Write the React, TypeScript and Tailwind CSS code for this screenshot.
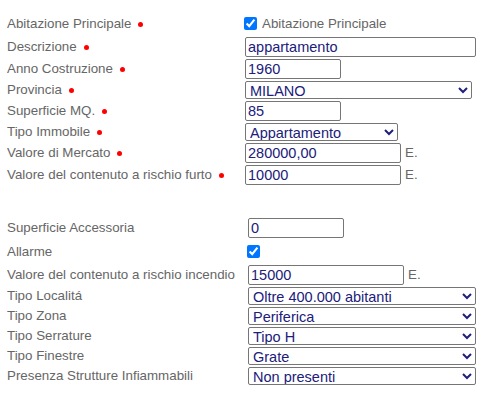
import React from 'react';

/**
 * Dati abitazione - form
 */

const labelCls = 'text-[13.33px] text-[#666666] leading-none whitespace-nowrap';
const inputCls =
  'h-[20px] border border-[#767676] rounded-[2px] bg-white px-[2px] text-[14.5px] leading-none text-[#20207a] outline-none';
const selectCls =
  'h-[18px] border border-[#767676] rounded-[2px] bg-white text-[14.5px] leading-none text-[#20207a] outline-none';

function Req() {
  return <span className="ml-[7px] inline-block h-[5px] w-[5px] rounded-full bg-[#ff0000] align-middle" />;
}

interface RowProps {
  label: string;
  required?: boolean;
  labelWidth: string;
  height: string;
  children: React.ReactNode;
}

function Row({ label, required, labelWidth, height, children }: RowProps) {
  return (
    <div className={`flex items-center ${height}`}>
      <div className={`${labelWidth} ${labelCls}`}>
        {label}
        {required && <Req />}
      </div>
      <div className="flex items-center">{children}</div>
    </div>
  );
}

function Euro() {
  return <span className="ml-[4px] text-[13.33px] text-[#666666]">E.</span>;
}

export default function App() {
  const w1 = 'w-[238px]';
  const w2 = 'w-[241px]';

  return (
    <div className="min-h-[398px] w-[485px] bg-white pl-[7px] pt-[12px] font-['Liberation_Sans',Arial,sans-serif]">
      {/* Dati principali */}
      <div>
        <Row label="Abitazione Principale" required labelWidth={w1} height="h-[24px]">
          <input type="checkbox" defaultChecked className="ml-[-1px] h-[13px] w-[13px] accent-[#0075ff]" />
          <span className={`ml-[5px] ${labelCls}`}>Abitazione Principale</span>
        </Row>
        <Row label="Descrizione" required labelWidth={w1} height="h-[22px]">
          <input defaultValue="appartamento" className={`${inputCls} w-[231px]`} />
        </Row>
        <Row label="Anno Costruzione" required labelWidth={w1} height="h-[22px]">
          <input defaultValue="1960" className={`${inputCls} w-[96px]`} />
        </Row>
        <Row label="Provincia" required labelWidth={w1} height="h-[20px]">
          <select defaultValue="MILANO" className={`${selectCls} w-[227px]`}>
            <option>MILANO</option>
          </select>
        </Row>
        <Row label="Superficie MQ." required labelWidth={w1} height="h-[22px]">
          <input defaultValue="85" className={`${inputCls} w-[96px]`} />
        </Row>
        <Row label="Tipo Immobile" required labelWidth={w1} height="h-[20px]">
          <select defaultValue="Appartamento" className={`${selectCls} w-[153px]`}>
            <option>Appartamento</option>
          </select>
        </Row>
        <Row label="Valore di Mercato" required labelWidth={w1} height="h-[22px]">
          <input defaultValue="280000,00" className={`${inputCls} w-[156px]`} />
          <Euro />
        </Row>
        <Row label="Valore del contenuto a rischio furto" required labelWidth={w1} height="h-[22px]">
          <input defaultValue="10000" className={`${inputCls} w-[156px]`} />
          <Euro />
        </Row>
      </div>

      {/* Dati accessori */}
      <div className="mt-[31px]">
        <Row label="Superficie Accessoria" labelWidth={w2} height="h-[22px]">
          <input defaultValue="0" className={`${inputCls} w-[96px]`} />
        </Row>
        <Row label="Allarme" labelWidth={w2} height="h-[25px]">
          <input type="checkbox" defaultChecked className="ml-[-1px] h-[13px] w-[13px] accent-[#0075ff]" />
        </Row>
        <Row label="Valore del contenuto a rischio incendio" labelWidth={w2} height="h-[22px]">
          <input defaultValue="15000" className={`${inputCls} w-[156px]`} />
          <Euro />
        </Row>
        <Row label="Tipo Localitá" labelWidth={w2} height="h-[20px]">
          <select defaultValue="Oltre 400.000 abitanti" className={`${selectCls} w-[228px]`}>
            <option>Oltre 400.000 abitanti</option>
          </select>
        </Row>
        <Row label="Tipo Zona" labelWidth={w2} height="h-[20px]">
          <select defaultValue="Periferica" className={`${selectCls} w-[228px]`}>
            <option>Periferica</option>
          </select>
        </Row>
        <Row label="Tipo Serrature" labelWidth={w2} height="h-[20px]">
          <select defaultValue="Tipo H" className={`${selectCls} w-[228px]`}>
            <option>Tipo H</option>
          </select>
        </Row>
        <Row label="Tipo Finestre" labelWidth={w2} height="h-[20px]">
          <select defaultValue="Grate" className={`${selectCls} w-[228px]`}>
            <option>Grate</option>
          </select>
        </Row>
        <Row label="Presenza Strutture Infiammabili" labelWidth={w2} height="h-[20px]">
          <select defaultValue="Non presenti" className={`${selectCls} w-[228px]`}>
            <option>Non presenti</option>
          </select>
        </Row>
      </div>
    </div>
  );
}
